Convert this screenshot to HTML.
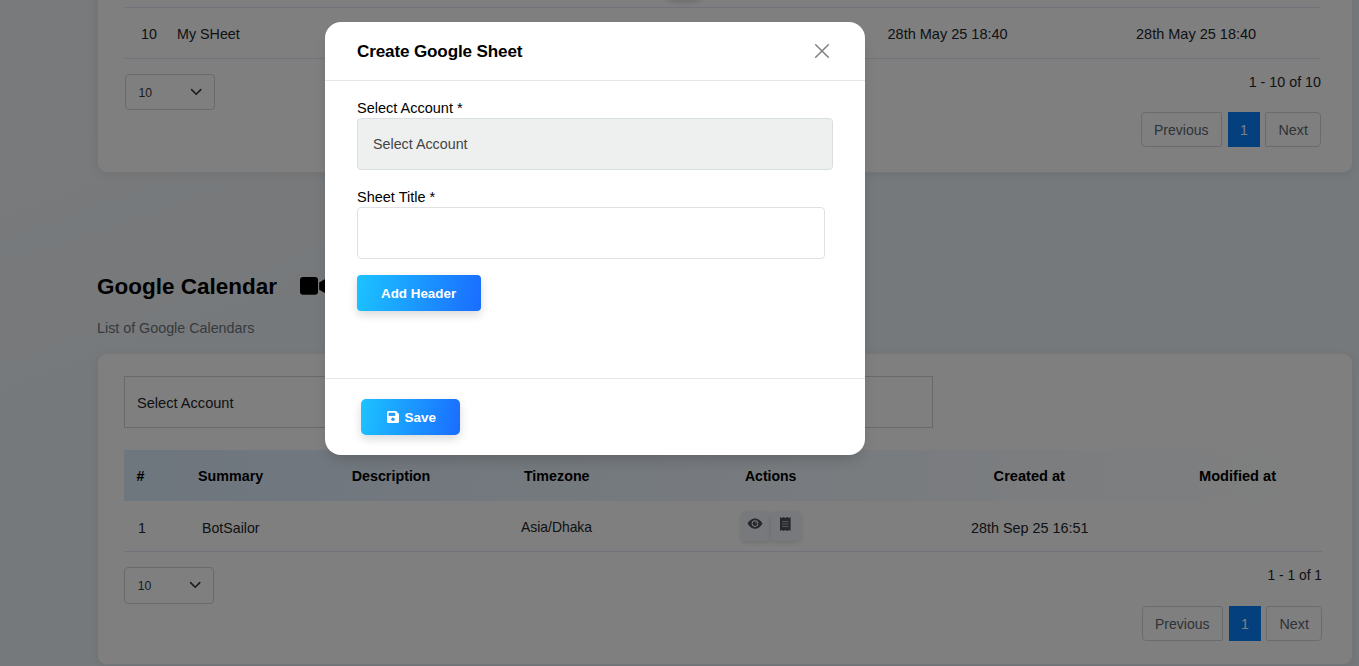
<!DOCTYPE html>
<html><head><meta charset="utf-8"><style>
html,body{margin:0;padding:0;}
body{width:1359px;height:666px;overflow:hidden;position:relative;background:linear-gradient(160deg,#f2f4f8 0%,#ecf3f7 45%,#e9f2f8 100%);font-family:"Liberation Sans", sans-serif;}
.t{position:absolute;white-space:nowrap;line-height:1;}
</style></head><body>
<div style="position:absolute;left:97px;top:-40px;width:1256px;height:213px;background:#fff;border-radius:10px;border:1px solid rgba(0,0,0,.07);box-sizing:border-box;box-shadow:0 2px 8px rgba(0,0,0,.08);"></div>
<div style="position:absolute;left:125px;top:7px;width:1196px;height:1px;background:#e4e6f4;"></div>
<div style="position:absolute;left:125px;top:58px;width:1196px;height:1px;background:#e4e6f4;"></div>
<div style="position:absolute;left:668px;top:-30px;width:32px;height:28px;border-radius:4px;box-shadow:0 2px 8px rgba(0,0,0,.25);background:#f1f3f6;"></div>
<div class="t" style="left:141px;top:26.90px;font-size:14.3px;font-weight:400;color:#212529;">10</div>
<div class="t" style="left:177px;top:26.90px;font-size:14.3px;font-weight:400;color:#212529;">My SHeet</div>
<div class="t" style="left:887.5px;top:26.73px;font-size:14.5px;font-weight:400;color:#212529;">28th May 25 18:40</div>
<div class="t" style="left:1136px;top:26.73px;font-size:14.5px;font-weight:400;color:#212529;">28th May 25 18:40</div>
<div style="position:absolute;left:125px;top:74px;width:90px;height:36px;border:1px solid #ced4da;border-radius:4px;box-sizing:border-box;"></div>
<div class="t" style="left:138.5px;top:87.07px;font-size:12.2px;font-weight:400;color:#343a40;">10</div>
<svg style="position:absolute;left:189px;top:86px" width="14" height="12" viewBox="0 0 14 12"><path d="M2.6 3.6 L7.2 8.3 L11.8 3.6" fill="none" stroke="#343a40" stroke-width="1.6" stroke-linecap="round" stroke-linejoin="round"/></svg>
<div class="t" style="right:38px;top:74.90px;font-size:14.3px;font-weight:400;color:#212529;">1 - 10 of 10</div>
<div style="position:absolute;left:1141px;top:112px;width:81px;height:35px;border:1px solid #d3d8de;border-radius:4px 2px 2px 4px;box-sizing:border-box;background:#fff;"></div>
<div class="t" style="left:1154px;top:123.15px;font-size:14px;font-weight:400;color:#5c6670;">Previous</div>
<div style="position:absolute;left:1228px;top:112px;width:32px;height:35px;background:#087ffc;"></div>
<div class="t" style="left:1240.0px;top:123.15px;font-size:14px;font-weight:400;color:#fff;">1</div>
<div style="position:absolute;left:1265px;top:112px;width:56px;height:35px;border:1px solid #d3d8de;border-radius:2px 4px 4px 2px;box-sizing:border-box;background:#fff;"></div>
<div class="t" style="left:1278.5px;top:122.90px;font-size:14.3px;font-weight:400;color:#5c6670;">Next</div>
<div class="t" style="left:97px;top:275.95px;font-size:22.5px;font-weight:700;color:#000;">Google Calendar</div>
<svg style="position:absolute;left:300px;top:277px" width="30" height="18" viewBox="0 0 30 18"><rect x="0" y="0" width="18" height="17.7" rx="3" fill="#000"/><path d="M19.2 5.5 L28.5 0 L28.5 18 L19.2 12.7 Z" fill="#000"/></svg>
<div class="t" style="left:97px;top:320.90px;font-size:14.3px;font-weight:400;color:#6c757d;">List of Google Calendars</div>
<div style="position:absolute;left:97px;top:353px;width:1256px;height:312px;background:#fff;border-radius:10px;border:1px solid rgba(0,0,0,.07);box-sizing:border-box;box-shadow:0 2px 8px rgba(0,0,0,.08);"></div>
<div style="position:absolute;left:124px;top:376px;width:809px;height:52px;border:1px solid #ced4da;box-sizing:border-box;"></div>
<div class="t" style="left:137px;top:395.64px;font-size:14.6px;font-weight:400;color:#212529;">Select Account</div>
<div style="position:absolute;left:124px;top:450px;width:1198px;height:51px;background:linear-gradient(to right,#dcecfc,#ffffff);"></div>
<div class="t" style="left:136.4px;top:468.90px;font-size:14.3px;font-weight:700;color:#000;">#</div>
<div class="t" style="left:198px;top:468.90px;font-size:14.3px;font-weight:700;color:#000;">Summary</div>
<div class="t" style="left:351.7px;top:468.90px;font-size:14.3px;font-weight:700;color:#000;">Description</div>
<div class="t" style="left:523.9px;top:468.90px;font-size:14.3px;font-weight:700;color:#000;">Timezone</div>
<div class="t" style="left:745px;top:469.15px;font-size:14.0px;font-weight:700;color:#000;">Actions</div>
<div class="t" style="left:993.6px;top:468.64px;font-size:14.6px;font-weight:700;color:#000;">Created at</div>
<div class="t" style="left:1199px;top:468.64px;font-size:14.6px;font-weight:700;color:#000;">Modified at</div>
<div class="t" style="left:138px;top:520.60px;font-size:14.3px;font-weight:400;color:#212529;">1</div>
<div class="t" style="left:202px;top:520.68px;font-size:14.2px;font-weight:400;color:#212529;">BotSailor</div>
<div class="t" style="left:521px;top:520.93px;font-size:13.9px;font-weight:400;color:#212529;">Asia/Dhaka</div>
<div class="t" style="left:971px;top:520.51px;font-size:14.4px;font-weight:400;color:#212529;">28th Sep 25 16:51</div>
<div style="position:absolute;left:741px;top:511px;width:30px;height:30px;background:#eef3f9;border-radius:5px;box-shadow:0 2px 5px rgba(0,0,0,.12);"></div>
<div style="position:absolute;left:771px;top:511px;width:30px;height:30px;background:#eef3f9;border-radius:5px;box-shadow:0 2px 5px rgba(0,0,0,.12);"></div>
<svg style="position:absolute;left:747px;top:518px" width="17" height="12" viewBox="0 0 17 12"><path d="M0.5 5.6 C2.5 2 5.3 0.4 8 0.4 C10.7 0.4 13.5 2 15.5 5.6 C13.5 9.2 10.7 10.8 8 10.8 C5.3 10.8 2.5 9.2 0.5 5.6 Z" fill="#4a4f55"/><circle cx="8" cy="5.6" r="3.3" fill="#eef3f9"/><circle cx="8" cy="5.6" r="2.4" fill="#4a4f55"/><circle cx="8.9" cy="4.7" r="0.9" fill="#eef3f9" opacity=".5"/></svg>
<svg style="position:absolute;left:780.4px;top:517px" width="11" height="14" viewBox="0 0 11 14"><path d="M0 0 L1.8 0.9 L3.6 0 L5.3 0.9 L7.1 0 L8.9 0.9 L10.6 0 L10.6 14 L8.9 13.1 L7.1 14 L5.3 13.1 L3.6 14 L1.8 13.1 L0 14 Z" fill="#4a4f55"/><rect x="2" y="4" width="6.6" height="1.1" fill="#a9adb3"/><rect x="2" y="6.5" width="6.6" height="1.1" fill="#a9adb3"/><rect x="2" y="9" width="6.6" height="1.1" fill="#a9adb3"/></svg>
<div style="position:absolute;left:124px;top:551px;width:1198px;height:1px;background:#e4e6f4;"></div>
<div style="position:absolute;left:124px;top:567px;width:90px;height:37px;border:1px solid #ced4da;border-radius:4px;box-sizing:border-box;"></div>
<div class="t" style="left:137.7px;top:580.07px;font-size:12.2px;font-weight:400;color:#343a40;">10</div>
<svg style="position:absolute;left:188px;top:579px" width="14" height="12" viewBox="0 0 14 12"><path d="M2.6 3.6 L7.2 8.3 L11.8 3.6" fill="none" stroke="#343a40" stroke-width="1.6" stroke-linecap="round" stroke-linejoin="round"/></svg>
<div class="t" style="right:37px;top:568.62px;font-size:13.8px;font-weight:400;color:#212529;">1 - 1 of 1</div>
<div style="position:absolute;left:1142px;top:606px;width:81px;height:35px;border:1px solid #d3d8de;border-radius:4px 2px 2px 4px;box-sizing:border-box;background:#fff;"></div>
<div class="t" style="left:1155px;top:617.15px;font-size:14px;font-weight:400;color:#5c6670;">Previous</div>
<div style="position:absolute;left:1229px;top:606px;width:32px;height:35px;background:#087ffc;"></div>
<div class="t" style="left:1241.0px;top:617.15px;font-size:14px;font-weight:400;color:#fff;">1</div>
<div style="position:absolute;left:1266px;top:606px;width:56px;height:35px;border:1px solid #d3d8de;border-radius:2px 4px 4px 2px;box-sizing:border-box;background:#fff;"></div>
<div class="t" style="left:1279.5px;top:616.90px;font-size:14.3px;font-weight:400;color:#5c6670;">Next</div>
<div style="position:absolute;left:0px;top:0px;width:1359px;height:666px;background:rgba(0,0,0,.5);"></div>
<div style="position:absolute;left:325px;top:22px;width:540px;height:433px;background:#fff;border-radius:16px;box-shadow:0 8px 16px -6px rgba(0,0,0,.22);overflow:hidden">
<div class="t" style="left:32px;top:21.32px;font-size:17.1px;font-weight:700;color:#000;letter-spacing:-0.15px;">Create Google Sheet</div>
<svg style="position:absolute;left:488px;top:20px" width="18" height="18" viewBox="0 0 18 18"><path d="M2.7 2.7 L15.3 15.3 M15.3 2.7 L2.7 15.3" stroke="#808080" stroke-width="1.5" stroke-linecap="round"/></svg>
<div style="position:absolute;left:0px;top:58px;width:540px;height:1px;background:#e3e6ea;"></div>
<div class="t" style="left:32px;top:78.73px;font-size:14.5px;font-weight:400;color:#000;">Select Account *</div>
<div style="position:absolute;left:32px;top:96px;width:476px;height:52px;background:#eef0f0;border:1px solid #dadfe4;border-radius:4px;box-sizing:border-box;"></div>
<div class="t" style="left:48px;top:114.90px;font-size:14.3px;font-weight:400;color:#444;">Select Account</div>
<div class="t" style="left:32px;top:167.73px;font-size:14.5px;font-weight:400;color:#000;">Sheet Title *</div>
<div style="position:absolute;left:32px;top:185px;width:468px;height:52px;background:#fff;border:1px solid #dee2e6;border-radius:4px;box-sizing:border-box;"></div>
<div style="position:absolute;left:32px;top:253px;width:124px;height:36px;background:linear-gradient(100deg,#1cc3ff,#1a6cff);border-radius:4px;box-shadow:0 4px 10px rgba(0,0,0,.15);"></div>
<div class="t" style="left:56px;top:264.66px;font-size:13.4px;font-weight:700;color:#fff;">Add Header</div>
<div style="position:absolute;left:0px;top:356px;width:540px;height:1px;background:#e3e6ea;"></div>
<div style="position:absolute;left:36px;top:377px;width:99px;height:36px;background:linear-gradient(100deg,#1cc3ff,#1a6cff);border-radius:5px;box-shadow:0 4px 10px rgba(0,0,0,.15);"></div>
<svg style="position:absolute;left:61.5px;top:389px" width="12" height="12" viewBox="0 0 12 12"><path d="M0 1.5 Q0 0 1.5 0 L9 0 L12 3 L12 10.5 Q12 12 10.5 12 L1.5 12 Q0 12 0 10.5 Z" fill="#fff"/><rect x="1.6" y="1.8" width="6.6" height="3.1" fill="#2a9af8"/><circle cx="6" cy="8.2" r="1.7" fill="#2a9af8"/></svg>
<div class="t" style="left:79.60000000000002px;top:388.57px;font-size:13.5px;font-weight:700;color:#fff;">Save</div>
</div>
</body></html>
